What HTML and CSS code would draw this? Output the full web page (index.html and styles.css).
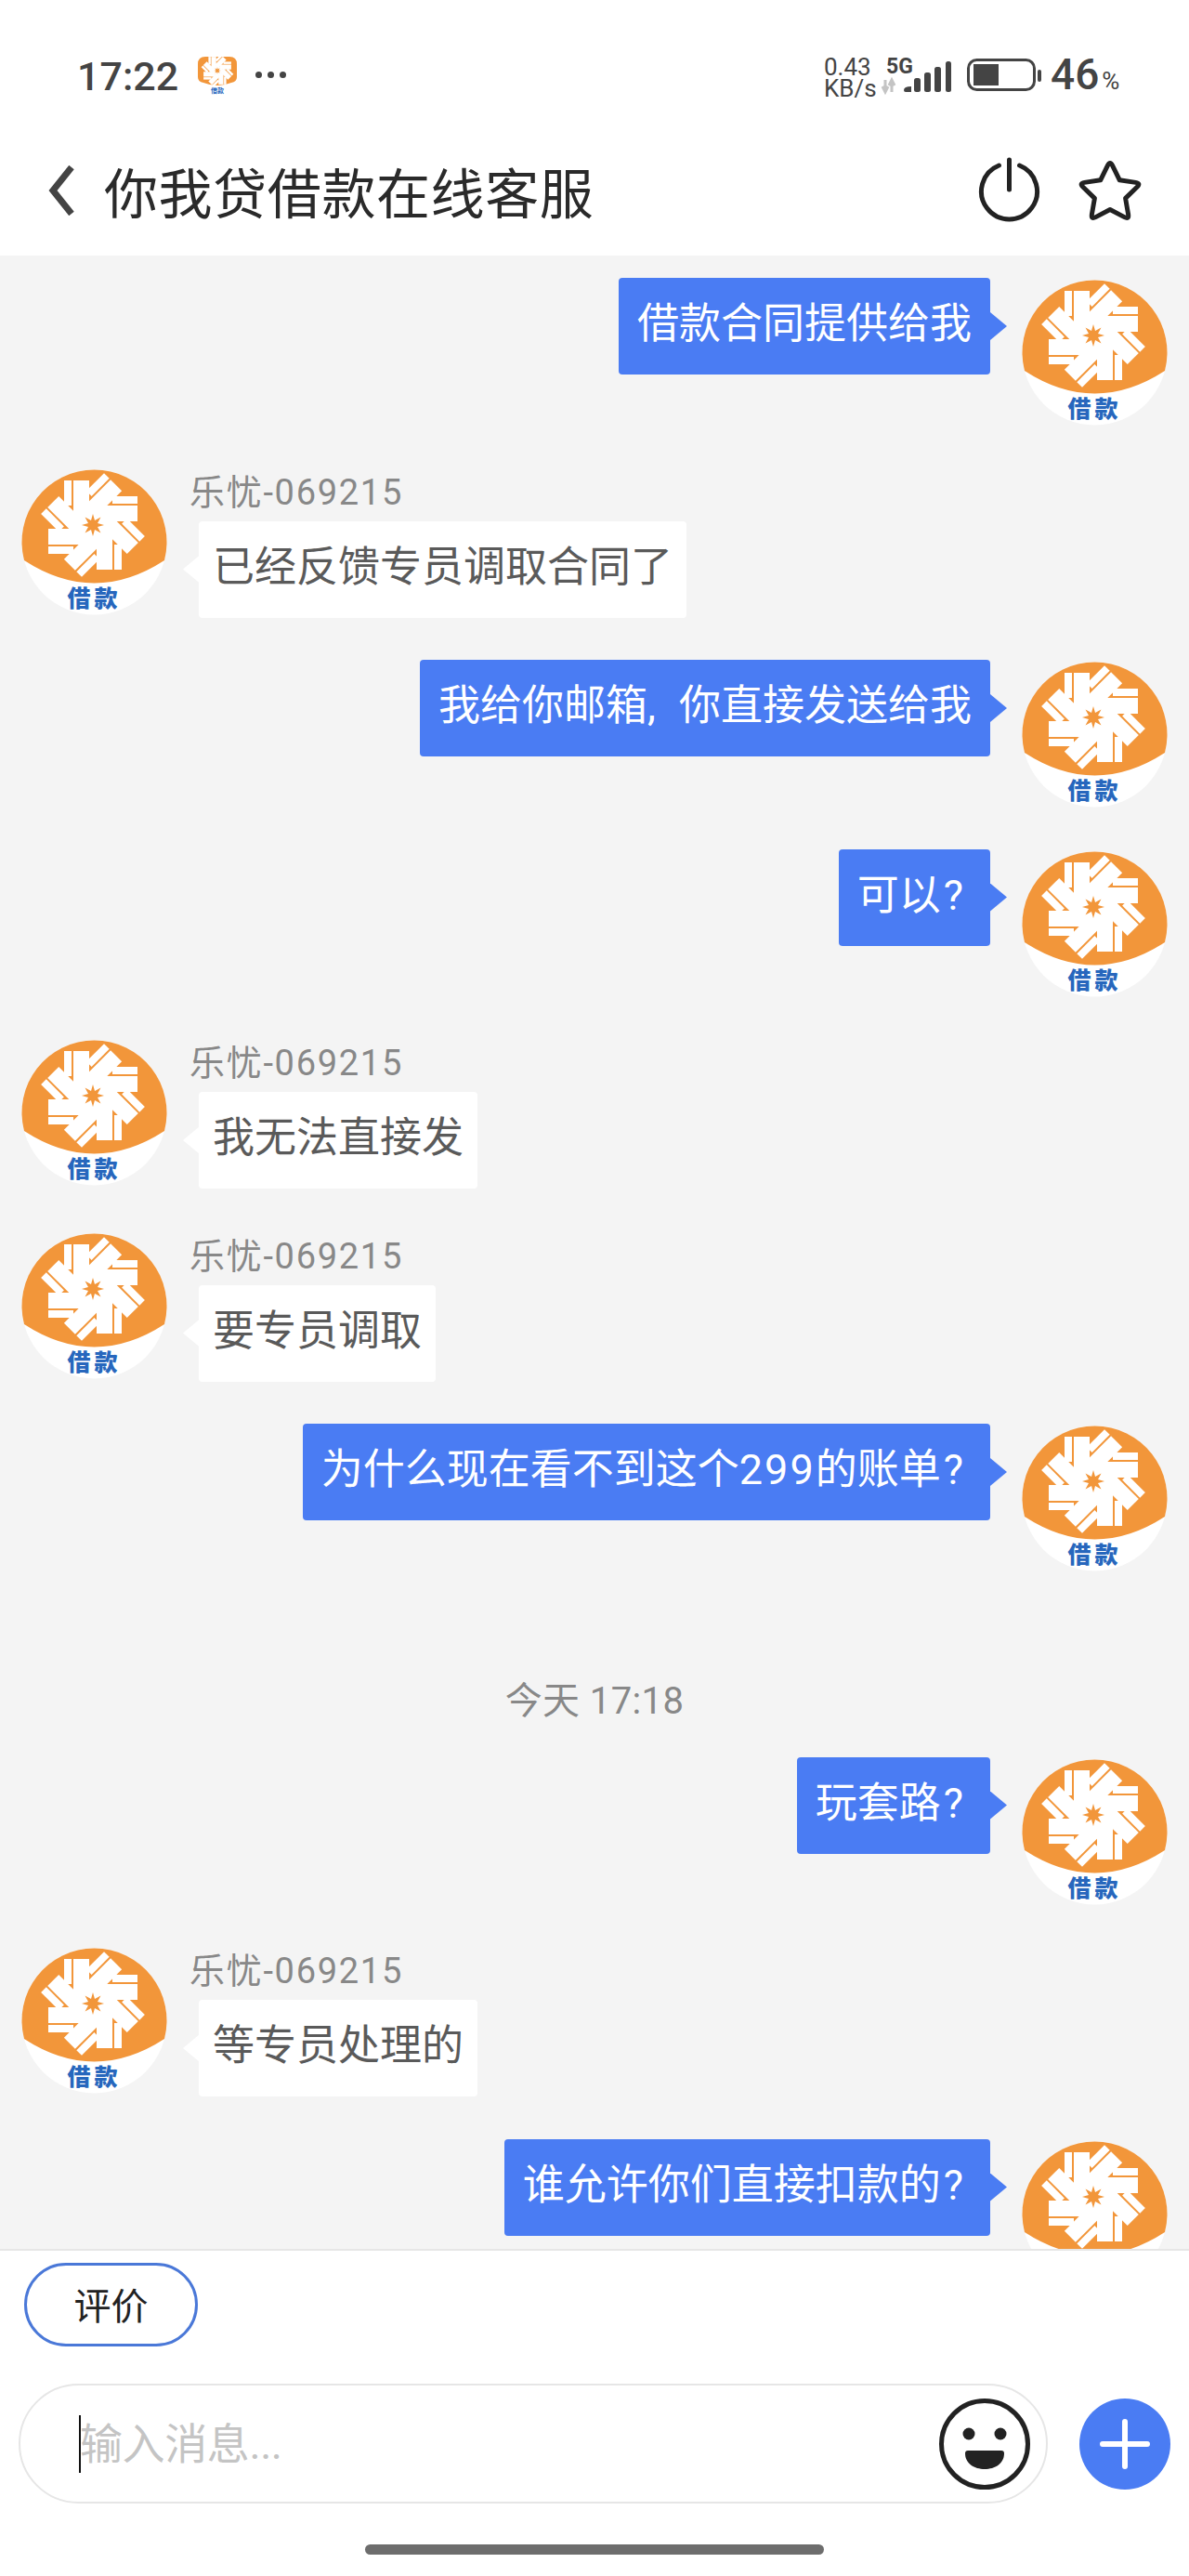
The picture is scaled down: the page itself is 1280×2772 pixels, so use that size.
FILE: index.html
```html
<!DOCTYPE html>
<html lang="zh-CN">
<head>
<meta charset="utf-8">
<title>你我贷借款在线客服</title>
<link rel="stylesheet" href="styles.css">
</head>
<body>
<svg class="defs" aria-hidden="true">
  <defs>
    <g id="blade">
      <rect x="-31" y="-48" width="8" height="27"/>
      <rect x="-21" y="-48" width="17" height="40"/>
    </g>
    <g id="wheel">
      <g class="wheel-white">
        <circle r="17"/>
        <use href="#blade"/>
        <use href="#blade" transform="rotate(45)"/>
        <use href="#blade" transform="rotate(90)"/>
        <use href="#blade" transform="rotate(135)"/>
        <use href="#blade" transform="rotate(180)"/>
        <use href="#blade" transform="rotate(225)"/>
        <use href="#blade" transform="rotate(270)"/>
        <use href="#blade" transform="rotate(315)"/>
      </g>
      <polygon class="wheel-star" points="0,-12 2,-5 8.5,-8.5 5,-2 12,0 5,2 8.5,8.5 2,5 0,12 -2,5 -8.5,8.5 -5,2 -12,0 -5,-2 -8.5,-8.5 -2,-5"/>
    </g>
    <symbol id="logo" viewBox="0 0 157 157">
      <circle cx="78.5" cy="78.5" r="78" fill="#fff"/>
      <path d="M3 98A78 78 0 1 1 154 98Q78.5 147 3 98Z" fill="#f2963a"/>
      <use href="#wheel" transform="translate(77 60)"/>
    </symbol>
  </defs>
</svg>

<div class="phone">
  <div class="status">
    <span class="clock">17:22</span>
    <span class="mini-app">
      <svg class="mini-icon" viewBox="0 0 42 32"><path d="M8 0H34Q42 0 42 8V22Q42 27 36 28Q21 34 6 28Q0 27 0 22V8Q0 0 8 0Z" fill="#f2963a"/><use href="#wheel" transform="translate(21 15) scale(.31)"/></svg>
      <span class="mini-label">借款</span>
    </span>
    <span class="dots"><i></i><i></i><i></i></span>
    <span class="status-right">
      <span class="speed"><span>0.43</span><span>KB/s</span></span>
      <svg class="signal" viewBox="0 0 74 40">
        <text class="signal-label" x="4" y="18">5G</text>
        <path d="M3 25V38M0 32L3 38L6 32M10 38V25M7 31L10 25L13 31" class="signal-arrows"/>
        <path d="M23 36Q23 32 31 32V38H25Q23 38 23 36Z" class="signal-bar"/>
        <rect class="signal-bar" x="34" y="23" width="7" height="15" rx="2.5"/>
        <rect class="signal-bar" x="45" y="17" width="7" height="21" rx="2.5"/>
        <rect class="signal-bar" x="56" y="11" width="7" height="27" rx="2.5"/>
        <rect class="signal-bar" x="68" y="5" width="6" height="33" rx="2.5"/>
      </svg>
      <svg class="battery" viewBox="0 0 80 36">
        <rect x="1.5" y="1.5" width="71" height="32" rx="9" class="battery-shell"/>
        <rect x="7" y="6" width="27" height="23" class="battery-fill"/>
        <rect x="76" y="12" width="4" height="13" rx="2" class="battery-fill"/>
      </svg>
      <span class="level">46<small>%</small></span>
    </span>
  </div>

  <header class="topbar">
    <svg class="back" viewBox="0 0 30 54"><path d="M26 2L6 27L26 52"/></svg>
    <h1 class="title">你我贷借款在线客服</h1>
    <div class="actions">
      <svg class="power" viewBox="0 0 70 72"><path d="M23.5 9A30 30 0 1 0 45.5 9M34.5 3V35"/></svg>
      <svg class="star" viewBox="0 0 74 70"><path d="M34.4 8.2Q37 3 39.6 8.2L47.3 23.8L64.6 26.35Q70.3 27.2 66.1 31.25L53.6 43.4L56.6 60.6Q57.6 66.3 52.45 63.6L37 55.5L21.55 63.6Q16.4 66.3 17.4 60.6L20.4 43.4L7.9 31.25Q3.7 27.2 9.45 26.35L26.7 23.8Z"/></svg>
    </div>
  </header>

  <main class="chat">
    <div class="row me"><div class="bubble">借款合同提供给我</div><div class="avatar"><svg><use href="#logo"/></svg><span>借款</span></div></div>
    <div class="row them"><div class="avatar"><svg><use href="#logo"/></svg><span>借款</span></div><div class="col"><div class="name">乐忧-069215</div><div class="bubble">已经反馈专员调取合同了</div></div></div>
    <div class="row me"><div class="bubble">我给你邮箱<span class="comma">,</span> 你直接发送给我</div><div class="avatar"><svg><use href="#logo"/></svg><span>借款</span></div></div>
    <div class="row me"><div class="bubble">可以<span class="ask">?</span></div><div class="avatar"><svg><use href="#logo"/></svg><span>借款</span></div></div>
    <div class="row them"><div class="avatar"><svg><use href="#logo"/></svg><span>借款</span></div><div class="col"><div class="name">乐忧-069215</div><div class="bubble">我无法直接发</div></div></div>
    <div class="row them"><div class="avatar"><svg><use href="#logo"/></svg><span>借款</span></div><div class="col"><div class="name">乐忧-069215</div><div class="bubble">要专员调取</div></div></div>
    <div class="row me"><div class="bubble">为什么现在看不到这个<span class="num">299</span>的账单<span class="ask">?</span></div><div class="avatar"><svg><use href="#logo"/></svg><span>借款</span></div></div>
    <div class="time">今天 17:18</div>
    <div class="row me"><div class="bubble">玩套路<span class="ask">?</span></div><div class="avatar"><svg><use href="#logo"/></svg><span>借款</span></div></div>
    <div class="row them"><div class="avatar"><svg><use href="#logo"/></svg><span>借款</span></div><div class="col"><div class="name">乐忧-069215</div><div class="bubble">等专员处理的</div></div></div>
    <div class="row me"><div class="bubble">谁允许你们直接扣款的<span class="ask">?</span></div><div class="avatar"><svg><use href="#logo"/></svg><span>借款</span></div></div>
  </main>

  <footer class="composer">
    <button class="rate">评价</button>
    <div class="entry">
      <div class="input">
        <i class="caret"></i>
        <span class="placeholder">输入消息...</span>
        <svg class="emoji" viewBox="0 0 98 98">
          <circle cx="49" cy="49" r="46.5" class="emoji-face"/>
          <circle cx="32" cy="38" r="6.5"/>
          <circle cx="66" cy="38" r="6.5"/>
          <path d="M28 59Q28 56 31 56H67Q70 56 70 59C70 70 60 76 49 76C38 76 28 70 28 59Z"/>
        </svg>
      </div>
      <svg class="plus" viewBox="0 0 98 98">
        <circle cx="49" cy="49" r="49" class="plus-disc"/>
        <path d="M49 25V73M25 49H73" class="plus-mark"/>
      </svg>
    </div>
    <div class="home"></div>
  </footer>
</div>
</body>
</html>
```

FILE: styles.css
```css
* { box-sizing: border-box; }
html, body { margin: 0; padding: 0; background: #fff; }
body { font-family: Roboto, "Noto Sans CJK SC", sans-serif; }
.defs { position: absolute; width: 0; height: 0; }
.wheel-white { fill: #fff; }
.wheel-star { fill: #f2963a; }

.phone { width: 1280px; height: 2772px; display: flex; flex-direction: column; overflow: hidden; }

/* status bar */
.status { height: 135px; flex: none; display: flex; align-items: center; padding: 27px 75px 0 83px; color: #444; }
.clock { font-size: 43px; font-weight: 500; line-height: 50px; width: 130px; margin-top: 1px; }
.mini-app { width: 42px; display: flex; flex-direction: column; align-items: center; }
.mini-icon { width: 42px; height: 32px; display: block; }
.mini-label { font-size: 7px; line-height: 9px; font-weight: 700; color: #2767bd; font-family: "Noto Sans CJK SC", sans-serif; }
.dots { display: flex; gap: 6px; margin-left: 20px; margin-top: -2px; }
.dots i { width: 7px; height: 7px; border-radius: 50%; background: #444; display: block; }
.status-right { margin-left: auto; display: flex; align-items: center; }
.speed { display: flex; flex-direction: column; font-size: 26px; line-height: 23px; width: 63px; padding-top: 5px; color: #444; }
.signal { width: 74px; height: 40px; display: block; overflow: visible; }
.signal-label { font-size: 23px; font-weight: 700; fill: #444; }
.signal-arrows { fill: none; stroke: #c4c4c4; stroke-width: 3; }
.signal-bar { fill: #444; }
.battery { width: 80px; height: 36px; margin-left: 17px; display: block; }
.battery-shell { fill: none; stroke: #444; stroke-width: 3; }
.battery-fill { fill: #444; }
.level { font-size: 46px; font-weight: 500; line-height: 50px; margin-left: 10px; margin-top: 5px; width: 74px; }
.level small { font-size: 26px; font-weight: 400; margin-left: 3px; }

/* title bar */
.topbar { height: 140px; flex: none; display: flex; align-items: center; padding-left: 51px; }
.back { width: 30px; height: 54px; flex: none; }
.back path { fill: none; stroke: #444; stroke-width: 7; }
.title { margin: 0 0 0 31px; font-size: 58px; font-weight: 400; line-height: 70px; letter-spacing: .6px; color: #2a2a2a; font-family: "Noto Sans CJK SC", sans-serif; }
.actions { margin-left: auto; display: flex; align-items: center; gap: 36px; padding-right: 48px; }
.power { width: 70px; height: 72px; display: block; }
.power path { fill: none; stroke: #222; stroke-width: 5; stroke-linecap: round; }
.star { width: 74px; height: 70px; display: block; }
.star path { fill: none; stroke: #222; stroke-width: 5; stroke-linejoin: round; }

/* conversation */
.chat { flex: 1; min-height: 0; overflow: hidden; background: #f4f4f4; padding: 24px 23px 0; }
.row { display: flex; height: 160px; margin-top: 45.5px; }
.row:first-child { margin-top: 0; }
.me + .me { margin-top: 43.5px; }
.them + .them { margin-top: 47.5px; }
.row.me { justify-content: flex-end; align-items: flex-start; gap: 34px; }
.avatar { position: relative; width: 157px; height: 157px; flex: none; }
.avatar svg { width: 157px; height: 157px; display: block; }
.avatar span { position: absolute; left: 0; right: 0; top: 122px; text-align: center; font-size: 25px; line-height: 30px; font-weight: 900; letter-spacing: 4px; color: #2767bd; font-family: "Noto Sans CJK SC", sans-serif; }
.me .avatar { margin-top: 2px; }
.col { margin-left: 24px; display: flex; flex-direction: column; align-items: flex-start; }
.name { height: 56px; font-size: 38px; line-height: 50px; letter-spacing: 1.7px; color: #888; }
.bubble { position: relative; height: 104px; padding: 0 20px; font-size: 45px; line-height: 100px; border-radius: 4px; white-space: nowrap; }
.bubble::after { content: ""; position: absolute; top: 37px; width: 18px; height: 30px; }
.me .bubble { background: #4a7cf3; color: #fff; }
.me .bubble::after { right: -18px; background: #4a7cf3; clip-path: polygon(0 0, 100% 50%, 0 100%); }
.them .bubble { margin-left: 10px; background: #fff; color: #5a5a5a; padding: 0 15px; }
.them .bubble::after { left: -17px; background: #fff; clip-path: polygon(100% 0, 0 50%, 100% 100%); }
.comma { margin: 0 14px 0 0; }
.ask { margin: 0 9px 0 3px; }
.num { letter-spacing: 2px; }
.time { margin: 115.5px 0 0; text-align: center; font-size: 40px; line-height: 46px; letter-spacing: .4px; color: #888; }
.time + .row { margin-top: 37px; }

/* composer */
.composer { flex: none; height: 352px; background: #fff; border-top: 2px solid #e6e6e6; padding-top: 13px; display: flex; flex-direction: column; }
.rate { width: 187px; height: 90px; margin-left: 26px; padding: 0 0 3px; background: #fff; border: 3px solid #4a78d8; border-radius: 45px; font: 400 40px/1 "Noto Sans CJK SC", sans-serif; color: #222; }
.entry { display: flex; align-items: center; margin: 40px 20px 0; gap: 34px; }
.input { width: 1108px; height: 129px; flex: none; border: 2px solid #e6e6e6; border-radius: 65px; display: flex; align-items: center; padding: 0 17px 0 63px; }
.caret { width: 2px; height: 62px; background: #111; display: block; flex: none; }
.placeholder { margin-left: -1px; font-size: 46px; line-height: 62px; color: #c4c4c4; letter-spacing: -.4px; }
.emoji { width: 98px; height: 98px; margin-left: auto; display: block; fill: #222; }
.emoji-face { fill: #fff; stroke: #222; stroke-width: 5; }
.plus { width: 98px; height: 98px; display: block; }
.plus-disc { fill: #4a7cf3; }
.plus-mark { fill: none; stroke: #fff; stroke-width: 6; stroke-linecap: round; }
.home { width: 494px; height: 11px; margin: 44px auto 0; border-radius: 6px; background: #6d6d6d; }
```
